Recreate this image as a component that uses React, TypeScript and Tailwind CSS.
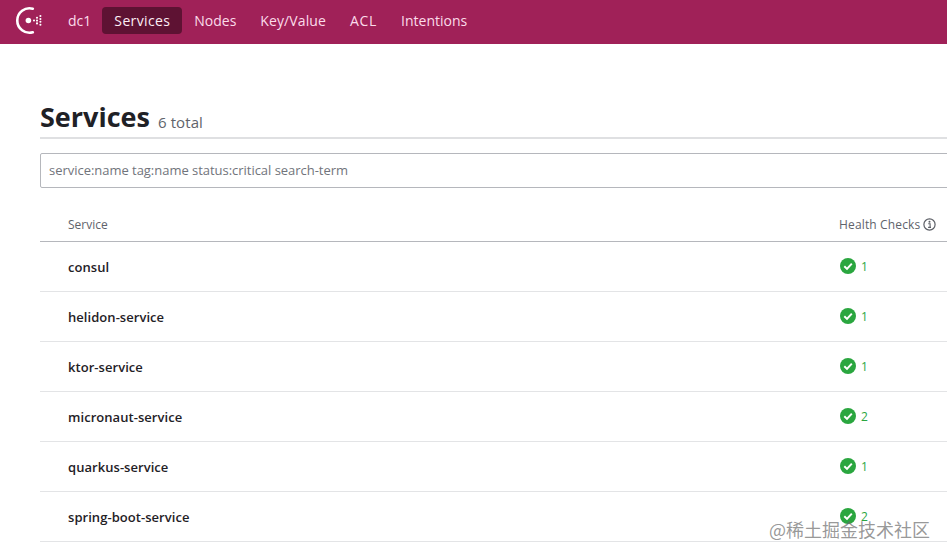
import React from "react";

const navItems = [
  { label: "Nodes", cls: "" },
  { label: "Key/Value", cls: "tracking-[0.1px]" },
  { label: "ACL", cls: "tracking-[0.7px]" },
  { label: "Intentions", cls: "" },
];

const services = [
  { name: "consul", checks: 1 },
  { name: "helidon-service", checks: 1 },
  { name: "ktor-service", checks: 1 },
  { name: "micronaut-service", checks: 2 },
  { name: "quarkus-service", checks: 1 },
  { name: "spring-boot-service", checks: 2 },
];

function ConsulLogo() {
  return (
    <svg width="30" height="30" viewBox="0 0 30 30" fill="none">
      <path d="M18.8 3.7A12.25 12.25 0 1 0 18.8 27.3" stroke="#fff" strokeWidth="2.6" strokeLinecap="round" />
      <circle cx="14.4" cy="15.5" r="2.8" fill="#fff" />
      <g fill="#fff">
        <circle cx="20" cy="15.5" r="1.05" />
        <circle cx="23" cy="12.8" r="1.05" />
        <circle cx="23" cy="15.6" r="1.05" />
        <circle cx="23" cy="18.4" r="1.05" />
        <circle cx="26.4" cy="11" r="1.05" />
        <circle cx="26.4" cy="14" r="1.05" />
        <circle cx="26.4" cy="16.8" r="1.05" />
        <circle cx="26.4" cy="19.8" r="1.05" />
      </g>
    </svg>
  );
}

function CheckIcon() {
  return (
    <svg width="16" height="16" viewBox="0 0 16 16">
      <circle cx="8" cy="8" r="8" fill="#2aa63f" />
      <path d="M4.3 8.3 7 10.9 11.8 5.6" fill="none" stroke="#fff" strokeWidth="2" />
    </svg>
  );
}

function InfoIcon() {
  return (
    <svg width="13" height="13" viewBox="0 0 13 13" fill="none">
      <circle cx="6.5" cy="6.5" r="5.6" stroke="#5c5f66" strokeWidth="1.2" />
      <circle cx="6.5" cy="3.8" r="1" fill="#5c5f66" />
      <path d="M5.2 5.8h1.9v3.4M5.1 9.4h2.9" stroke="#5c5f66" strokeWidth="1.1" />
    </svg>
  );
}

export default function App() {
  return (
    <div className="relative w-[947px] h-[557px] overflow-hidden bg-white font-['Open_Sans',sans-serif]">
      {/* Top nav */}
      <div className="h-11 bg-[#a02158] flex items-center pl-[14px] pb-1">
        <ConsulLogo />
        <span className="ml-[24px] text-[14px] text-[#fbdcea]">dc1</span>
        <div className="ml-[11px] h-[27px] w-[80px] flex items-center justify-center rounded bg-[#5e1233] text-[14px] font-medium tracking-[0.35px] text-[#fdeef5]">
          Services
        </div>
        <div className="ml-[12px] flex gap-[24px] text-[14px] text-[#fbdcea]">
          {navItems.map((item) => (
            <span key={item.label} className={item.cls}>
              {item.label}
            </span>
          ))}
        </div>
      </div>

      {/* Content */}
      <div className="pl-10 w-[1000px]">
        <div className="h-[95px] flex items-end gap-2 border-b-2 border-[#dfe0e2]">
          <h1 className="text-[27px] leading-[40px] font-bold text-[#1f2126]">Services</h1>
          <span className="text-[15px] leading-[30px] tracking-[0.1px] text-[#60636b]">6 total</span>
        </div>
        <div className="mt-[14px] h-[35px] flex items-center border border-[#b5b7bc] rounded-[2px] pl-2 text-[13px] tracking-[-0.03px] text-[#71747b]">
          <span className="mt-[1px]">service:name tag:name status:critical search-term</span>
        </div>

        {/* Table */}
        <div className="mt-[20px] h-[34px] flex items-center border-b border-[#b5b7bc] text-[12px] text-[#60636b]">
          <div className="w-[799px] pl-7">Service</div>
          <div className="flex items-center gap-[3px] tracking-[0.15px]">
            Health Checks <InfoIcon />
          </div>
        </div>
        {services.map((s) => (
          <div key={s.name} className="h-[50px] flex items-center border-b border-[#e3e4e6]">
            <div className="w-[799px] pl-7 pt-[2px] text-[13px] font-semibold tracking-[0.05px] text-[#1f2126]">{s.name}</div>
            <div className="flex items-center gap-[5px] pl-px text-[12px] text-[#2aa63f]">
              <span className="-mt-[2px]">
                <CheckIcon />
              </span>
              <span className="mt-[1px]">{s.checks}</span>
            </div>
          </div>
        ))}
      </div>

      {/* Watermark */}
      <div className="absolute left-[769px] top-[517px] text-[18px] leading-6 text-[#6b6b6b]/70 font-['Noto_Sans_CJK_SC',sans-serif]">
        @稀土掘金技术社区
      </div>
    </div>
  );
}
